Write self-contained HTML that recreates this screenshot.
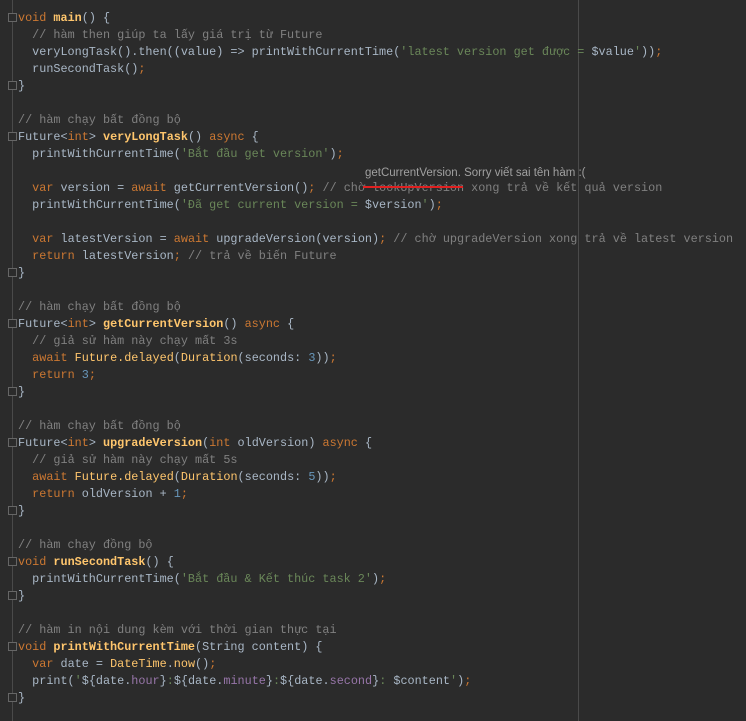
<!DOCTYPE html>
<html><head><meta charset="utf-8"><style>
html,body{margin:0;padding:0;background:#2b2b2b;width:746px;height:721px;overflow:hidden;position:relative}
.g{position:absolute;left:12px;top:0;width:1px;height:721px;background:#4a4a4a}
.m{position:absolute;left:578px;top:0;width:1px;height:721px;background:#4a4a4a}
pre{position:absolute;left:18px;top:10px;margin:0;font-family:"Liberation Mono","DejaVu Sans Mono",monospace;font-size:11.8px;line-height:17px;color:#a9b7c6;font-weight:normal;letter-spacing:0}
.k{color:#cc7832}.f{color:#ffc66d}.d{color:#ffc66d;font-weight:bold}.c{color:#808080}.s{color:#6a8759}.n{color:#6897bb}.p{color:#9876aa}
.tip{position:absolute;left:365px;top:167px;font-family:"Liberation Sans","DejaVu Sans",sans-serif;font-size:11.5px;color:#a0a0a0}
.st{position:absolute;left:363px;top:186px;width:100px;height:2px;background:#e02020}
.fold{position:absolute;left:8px;width:7px;height:7px;border:1px solid #666;background:#2b2b2b}
</style></head><body>
<div class="g"></div><div class="m"></div>
<pre><span class="k">void</span> <span class="d">main</span>() {
  <span class="c">// hàm then giúp ta lấy giá trị từ Future</span>
  veryLongTask().then((value) =&gt; printWithCurrentTime(<span class="s">'latest version get được = </span>$value<span class="s">'</span>))<span class="k">;</span>
  runSecondTask()<span class="k">;</span>
}

<span class="c">// hàm chạy bất đồng bộ</span>
Future&lt;<span class="k">int</span>&gt; <span class="d">veryLongTask</span>() <span class="k">async</span> {
  printWithCurrentTime(<span class="s">'Bắt đầu get version'</span>)<span class="k">;</span>

  <span class="k">var</span> version = <span class="k">await</span> getCurrentVersion()<span class="k">;</span> <span class="c">// chờ lookUpVersion xong trả về kết quả version</span>
  printWithCurrentTime(<span class="s">'Đã get current version = </span>$version<span class="s">'</span>)<span class="k">;</span>

  <span class="k">var</span> latestVersion = <span class="k">await</span> upgradeVersion(version)<span class="k">;</span> <span class="c">// chờ upgradeVersion xong trả về latest version</span>
  <span class="k">return</span> latestVersion<span class="k">;</span> <span class="c">// trả về biến Future</span>
}

<span class="c">// hàm chạy bất đồng bộ</span>
Future&lt;<span class="k">int</span>&gt; <span class="d">getCurrentVersion</span>() <span class="k">async</span> {
  <span class="c">// giả sử hàm này chạy mất 3s</span>
  <span class="k">await</span> <span class="f">Future.delayed</span>(<span class="f">Duration</span>(seconds: <span class="n">3</span>))<span class="k">;</span>
  <span class="k">return</span> <span class="n">3</span><span class="k">;</span>
}

<span class="c">// hàm chạy bất đồng bộ</span>
Future&lt;<span class="k">int</span>&gt; <span class="d">upgradeVersion</span>(<span class="k">int</span> oldVersion) <span class="k">async</span> {
  <span class="c">// giả sử hàm này chạy mất 5s</span>
  <span class="k">await</span> <span class="f">Future.delayed</span>(<span class="f">Duration</span>(seconds: <span class="n">5</span>))<span class="k">;</span>
  <span class="k">return</span> oldVersion + <span class="n">1</span><span class="k">;</span>
}

<span class="c">// hàm chạy đồng bộ</span>
<span class="k">void</span> <span class="d">runSecondTask</span>() {
  printWithCurrentTime(<span class="s">'Bắt đầu &amp; Kết thúc task 2'</span>)<span class="k">;</span>
}

<span class="c">// hàm in nội dung kèm với thời gian thực tại</span>
<span class="k">void</span> <span class="d">printWithCurrentTime</span>(String content) {
  <span class="k">var</span> date = <span class="f">DateTime</span>.<span class="f">now</span>()<span class="k">;</span>
  print(<span class="s">'</span>${date.<span class="p">hour</span>}<span class="s">:</span>${date.<span class="p">minute</span>}<span class="s">:</span>${date.<span class="p">second</span>}<span class="s">: </span>$content<span class="s">'</span>)<span class="k">;</span>
}</pre>
<div class="tip">getCurrentVersion. Sorry viết sai tên hàm :(</div>
<div class="st"></div>
<div class="fold" style="top:13px"></div><div class="fold" style="top:81px"></div>
<div class="fold" style="top:132px"></div><div class="fold" style="top:268px"></div>
<div class="fold" style="top:319px"></div><div class="fold" style="top:387px"></div>
<div class="fold" style="top:438px"></div><div class="fold" style="top:506px"></div>
<div class="fold" style="top:557px"></div><div class="fold" style="top:591px"></div>
<div class="fold" style="top:642px"></div><div class="fold" style="top:693px"></div>
</body></html>
